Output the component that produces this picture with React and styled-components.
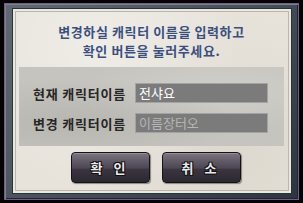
import styled, { createGlobalStyle } from 'styled-components';

const Global = createGlobalStyle`
  html, body {
    margin: 0;
    padding: 0;
    background: #050304;
    font-family: "Noto Sans CJK KR", "Noto Sans", sans-serif;
  }
  #root {
    width: 303px;
    height: 203px;
    overflow: hidden;
  }
`;

const Frame = styled.div`
  box-sizing: border-box;
  margin: 3px 0 0 4px;
  width: 295px;
  height: 197px;
  padding: 5px 7px 6px 8px;
  border: 1px solid #7a5a86;
  background: linear-gradient(135deg, #5f6a74 0%, #48535d 45%, #2c3640 100%);
  box-shadow: inset 1px 1px 0 #77828c, inset -1px -1px 0 #1e262e;
`;

const Parchment = styled.div`
  box-sizing: border-box;
  height: 100%;
  padding: 13px 7px 0 6px;
  background:
    radial-gradient(circle at 30% 20%, rgba(255, 255, 255, 0.35), transparent 60%),
    radial-gradient(circle at 80% 80%, rgba(200, 192, 178, 0.3), transparent 55%),
    #e7e3db;
  box-shadow:
    inset 0 0 0 2px #ebe8e1,
    inset 0 0 0 3px #bdb6a8,
    0 0 0 1px #2a323a;
  display: flex;
  flex-direction: column;
`;

const Title = styled.p`
  margin: 0;
  text-align: center;
  color: #3b4f7f;
  font-size: 13px;
  font-weight: 700;
  line-height: 19px;
  letter-spacing: 0.6px;
`;

const Panel = styled.div`
  box-sizing: border-box;
  margin-top: 7px;
  height: 79px;
  padding: 16px 0 0 14px;
  background:
    radial-gradient(ellipse at 20% 70%, rgba(170, 168, 162, 0.5), transparent 55%),
    radial-gradient(ellipse at 75% 30%, rgba(215, 213, 208, 0.6), transparent 50%),
    #c6c4be;
  display: flex;
  flex-direction: column;
  gap: 10px;
`;

const Row = styled.div`
  display: flex;
  align-items: center;
  height: 20px;
`;

const Label = styled.span`
  width: 102px;
  color: #262626;
  font-size: 13px;
  font-weight: 700;
  letter-spacing: 0.8px;
  white-space: nowrap;
`;

const Field = styled.div`
  box-sizing: border-box;
  width: 133px;
  height: 20px;
  padding: 0 3px;
  background: #7b7b7b;
  border: 1px solid #a3a3a3;
  color: ${p => (p.$muted ? '#b6b6b6' : '#ffffff')};
  font-size: 13px;
  line-height: 18px;
  white-space: nowrap;
`;

const Buttons = styled.div`
  display: flex;
  justify-content: center;
  gap: 12px;
  margin-top: 6px;
  padding-left: 8px;
`;

const Button = styled.button`
  box-sizing: border-box;
  width: 79px;
  height: 31px;
  padding: 0;
  border: 1px solid #141216;
  border-radius: 4px;
  background: linear-gradient(
    to bottom,
    #7b7580 0%,
    #5f5965 30%,
    #4c4752 52%,
    #3a3540 56%,
    #2c2830 100%
  );
  box-shadow: inset 0 1px 0 #948e9a, 1px 1px 1px rgba(0, 0, 0, 0.4);
  color: #ece8ee;
  font-family: "Noto Sans CJK KR", sans-serif;
  font-size: 13px;
  font-weight: 700;
  letter-spacing: 4px;
  text-shadow: 1px 1px 0 #111, -1px -1px 0 #111, 1px -1px 0 #111, -1px 1px 0 #111;
`;

export default function App() {
  return (
    <>
      <Global />
      <Frame>
        <Parchment>
          <Title>
            변경하실 캐릭터 이름을 입력하고
            <br />
            확인 버튼을 눌러주세요.
          </Title>
          <Panel>
            <Row>
              <Label>현재 캐릭터이름</Label>
              <Field>전샤요</Field>
            </Row>
            <Row>
              <Label>변경 캐릭터이름</Label>
              <Field $muted>이름장터오</Field>
            </Row>
          </Panel>
          <Buttons>
            <Button>확 인</Button>
            <Button>취 소</Button>
          </Buttons>
        </Parchment>
      </Frame>
    </>
  );
}
